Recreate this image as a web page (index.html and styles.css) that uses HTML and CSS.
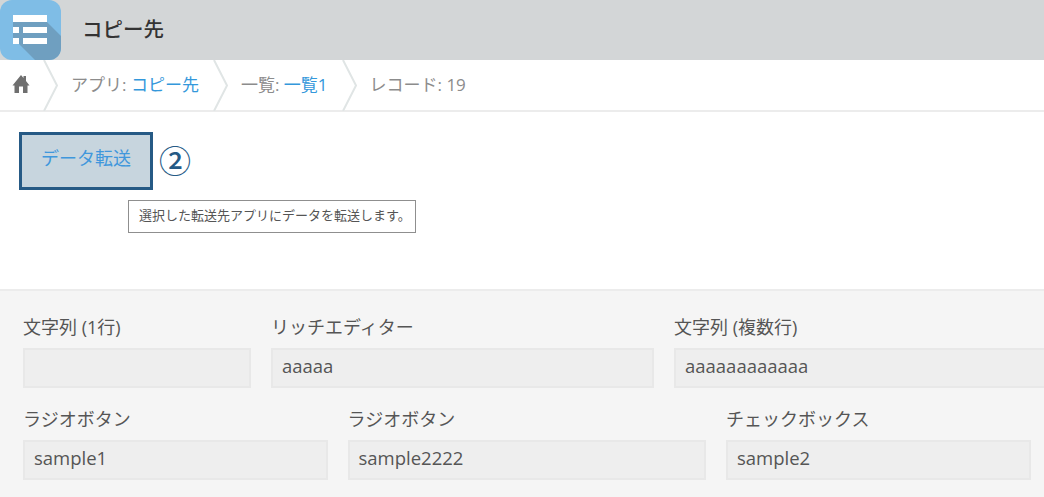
FILE: index.html
```html
<!DOCTYPE html>
<html lang="ja">
<head>
  <meta charset="UTF-8">
  <meta name="viewport" content="width=device-width, initial-scale=1.0">
  <title>コピー先</title>
  <link rel="stylesheet" href="styles.css">
</head>
<body>
  <header class="app-header">
    <div class="app-icon">
      <svg width="61" height="60" viewBox="0 0 61 60">
        <path d="M13 15H47V22L61 36V52Q61 60 53 60H35L13 38Z" fill="#6f9fc0"/>
        <rect x="13" y="15" width="34" height="7" fill="#fff"/>
        <rect x="13" y="27" width="6" height="6" fill="#fff"/>
        <rect x="23" y="27" width="24" height="6" fill="#fff"/>
        <rect x="13" y="38" width="6" height="6" fill="#fff"/>
        <rect x="23" y="38" width="24" height="6" fill="#fff"/>
      </svg>
    </div>
    <h1 class="app-name">コピー先</h1>
  </header>

  <nav class="breadcrumb">
    <div class="crumb-home">
      <svg width="18" height="18" viewBox="0 0 18 18">
        <path d="M9 0L11.500 3V1H14V6L17.500 10.500H15.500V18H11V11.500H7V18H2.500V10.500H0.500Z" fill="#6f6f6f"/>
      </svg>
    </div>
    <svg class="chevron" width="15" height="51" viewBox="0 0 15 51"><path d="M1 0L14 25.500L1 51" fill="none" stroke="#e0e5e5" stroke-width="2"/></svg>
    <div class="crumb">アプリ: <a href="#">コピー先</a></div>
    <svg class="chevron" width="15" height="51" viewBox="0 0 15 51"><path d="M1 0L14 25.500L1 51" fill="none" stroke="#e0e5e5" stroke-width="2"/></svg>
    <div class="crumb">一覧: <a href="#">一覧1</a></div>
    <svg class="chevron" width="15" height="51" viewBox="0 0 15 51"><path d="M1 0L14 25.500L1 51" fill="none" stroke="#e0e5e5" stroke-width="2"/></svg>
    <div class="crumb">レコード: 19</div>
  </nav>

  <section class="toolbar">
    <div class="toolbar-row">
      <button class="transfer-button">データ転送</button>
      <span class="step-number">②</span>
    </div>
    <div class="tooltip">選択した転送先アプリにデータを転送します。</div>
  </section>

  <main class="record">
    <div class="record-row">
      <div class="field w-228">
        <div class="field-label">文字列 (1行)</div>
        <div class="field-value"></div>
      </div>
      <div class="field w-383">
        <div class="field-label">リッチエディター</div>
        <div class="field-value">aaaaa</div>
      </div>
      <div class="field w-400">
        <div class="field-label">文字列 (複数行)</div>
        <div class="field-value">aaaaaaaaaaaa</div>
      </div>
    </div>
    <div class="record-row">
      <div class="field w-304">
        <div class="field-label">ラジオボタン</div>
        <div class="field-value">sample1</div>
      </div>
      <div class="field w-358">
        <div class="field-label">ラジオボタン</div>
        <div class="field-value">sample2222</div>
      </div>
      <div class="field w-305">
        <div class="field-label">チェックボックス</div>
        <div class="field-value">sample2</div>
      </div>
    </div>
  </main>
</body>
</html>
```

FILE: styles.css
```css
* {
  margin: 0;
  padding: 0;
  box-sizing: border-box;
}

html, body {
  height: 497px;
  overflow: hidden;
}

body {
  width: 1044px;
  background-color: #ffffff;
  color: #555555;
  font-family: "Open Sans", "Noto Sans CJK JP", sans-serif;
  font-size: 17px;
}

a {
  color: #3498db;
  text-decoration: none;
}

.app-header {
  display: flex;
  align-items: center;
  height: 60px;
  background-color: #d3d6d7;
}

.app-icon {
  width: 61px;
  height: 60px;
  background-color: #7fbde6;
  border-radius: 12px;
  overflow: hidden;
}

.app-name {
  margin-left: 21px;
  padding-bottom: 4px;
  font-size: 20.500px;
  font-weight: 500;
  color: #333333;
}

.breadcrumb {
  display: flex;
  align-items: center;
  height: 52px;
  border-bottom: 2px solid #ececec;
}

.crumb {
  padding-bottom: 3px;
  margin-right: 14px;
  color: #8c8c8c;
  white-space: nowrap;
}

.crumb-home {
  display: flex;
  margin-left: 12px;
  margin-right: 13px;
  padding-bottom: 2px;
}

.chevron {
  flex: none;
  margin-right: 13px;
}

.toolbar {
  height: 179px;
  padding: 20px 0 0 19px;
  border-bottom: 2px solid #ececec;
}

.toolbar-row {
  display: flex;
  align-items: center;
}

.transfer-button {
  width: 134px;
  height: 58px;
  padding-bottom: 8px;
  background-color: #c7d5de;
  border: 3px solid #265a85;
  color: #3f97dc;
  font-family: inherit;
  font-size: 18px;
}

.step-number {
  margin-left: 6px;
  font-size: 32px;
  line-height: 1;
  font-weight: 500;
  color: #265a85;
}

.tooltip {
  width: 288px;
  height: 33px;
  margin: 10px 0 0 109px;
  padding-left: 10px;
  line-height: 29px;
  background-color: #ffffff;
  border: 1px solid #8f8f8f;
  color: #555555;
  font-size: 13px;
  white-space: nowrap;
}

.record {
  height: 206px;
  padding: 24px 0 0 23px;
  background-color: #f5f5f5;
}

.record-row {
  display: flex;
  gap: 20px;
  margin-bottom: 19px;
}

.field {
  flex: none;
}

.field-label {
  height: 33px;
  line-height: 25px;
  font-size: 18px;
  color: #555555;
  white-space: nowrap;
}

.field-value {
  height: 40px;
  padding-left: 9px;
  line-height: 32px;
  background-color: #eeeeee;
  border: 2px solid #e8e8e8;
  color: #555555;
  font-size: 18.500px;
}

.w-228 { width: 228px; }
.w-383 { width: 383px; }
.w-400 { width: 400px; }
.w-304 { width: 304.500px; }
.w-358 { width: 358.500px; }
.w-305 { width: 305px; }
```
